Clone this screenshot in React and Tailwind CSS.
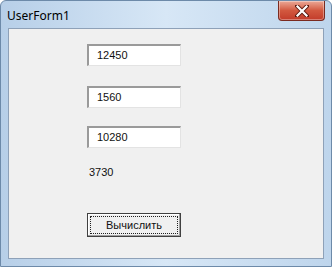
import React from "react";

const Field = ({ value }) => (
  <div className="w-[94px] h-[22px] bg-white border-t-2 border-l-2 border-t-[#9a9a9a] border-l-[#9a9a9a] border-r border-b border-r-[#e3e3e3] border-b-[#e3e3e3] flex items-center pl-[8px] text-[11px] text-[#111]">
    {value}
  </div>
);

const CloseButton = () => (
  <div className="w-[47px] h-[20px] rounded-b-[4px] border border-t-0 border-[#7a2a20] bg-gradient-to-b from-[#eaa897] via-[#d2583f] to-[#c23b2a] flex items-center justify-center shadow-[inset_0_0_0_1px_rgba(255,255,255,0.35)]">
    <svg width="14" height="12" viewBox="0 0 14 12">
      <path d="M2 1 L12 11 M12 1 L2 11" stroke="#5a1a10" strokeWidth="4" strokeLinecap="square" />
      <path d="M2.5 1.5 L11.5 10.5 M11.5 1.5 L2.5 10.5" stroke="#ffffff" strokeWidth="2.2" strokeLinecap="square" />
    </svg>
  </div>
);

export default function App() {
  return (
    <div
      className="w-[332px] h-[267px] rounded-t-[6px] border border-[#6d8aa9] bg-gradient-to-r from-[#b7cfe8] via-[#d7e7f6] to-[#bed5ec] flex flex-col"
      style={{ fontFamily: '"Liberation Sans", Arial, sans-serif' }}
    >
      <div className="h-[27px] flex items-start justify-between">
        <div
          className="pl-[6px] pt-[6px] text-[12px] text-black"
          style={{ fontFamily: '"Noto Sans", "Open Sans", sans-serif' }}
        >
          UserForm1
        </div>
        <div className="mr-[6px]">
          <CloseButton />
        </div>
      </div>
      <div className="mx-[7px] mb-[7px] flex-1 border border-[#8ea1b8] bg-[#f0f0f0] flex flex-col pl-[78px] pt-[15px]">
        <Field value="12450" />
        <div className="h-[20px]" />
        <Field value="1560" />
        <div className="h-[18px]" />
        <Field value="10280" />
        <div className="pt-[18px] pl-[2px] text-[11px] text-[#111] leading-[13px]">3730</div>
        <div className="h-[34px]" />
        <div className="w-[94px] h-[24px] border border-[#404040] bg-[#f0f0f0] p-[2px] shadow-[inset_-1px_-1px_0_#a0a0a0,inset_1px_1px_0_#ffffff]">
          <div className="w-full h-full border border-dotted border-[#202020] flex items-center justify-center text-[11px] text-[#111]">
            Вычислить
          </div>
        </div>
      </div>
    </div>
  );
}
